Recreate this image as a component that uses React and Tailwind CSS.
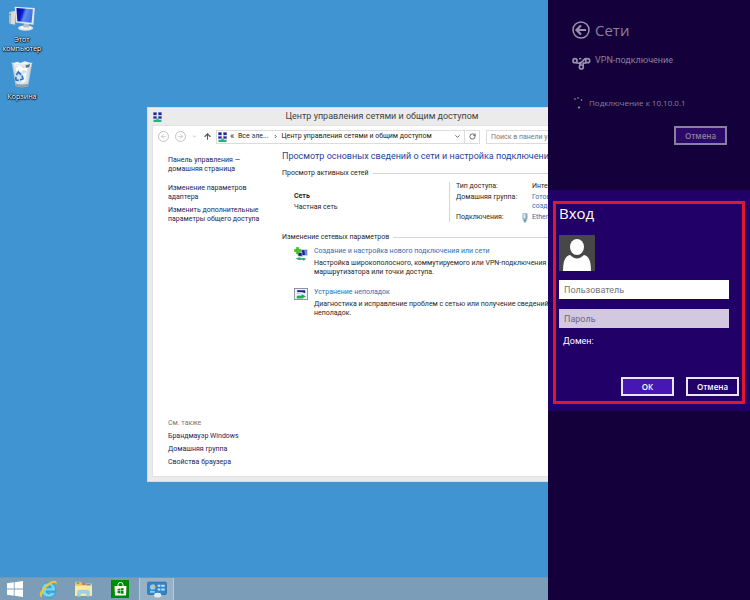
import { ArrowLeft, ArrowRight, ArrowUp, ChevronDown, RotateCw } from "lucide-react";

const SIDE_LINKS = [
  { lines: ["Панель управления —", "домашняя страница"], gap: "mb-[10px]" },
  { lines: ["Изменение параметров", "адаптера"], gap: "mb-1" },
  { lines: ["Изменить дополнительные", "параметры общего доступа"], gap: "" },
];

const SEE_ALSO = ["Брандмауэр Windows", "Домашняя группа", "Свойства браузера"];

function NetworkIcon({ className }) {
  return (
    <svg viewBox="0 0 18 20" className={className} aria-hidden="true">
      <rect x="0" y="0" width="8" height="7" fill="#b9bfdb" />
      <rect x="1" y="1" width="6" height="5" fill="#22229c" />
      <rect x="10" y="0" width="8" height="7" fill="#b9bfdb" />
      <rect x="11" y="1" width="6" height="5" fill="#22229c" />
      <rect x="0" y="8" width="8" height="7" fill="#b9bfdb" />
      <rect x="1" y="9" width="6" height="4" fill="#22229c" />
      <rect x="10" y="8" width="8" height="7" fill="#b9bfdb" />
      <rect x="11" y="9" width="6" height="4" fill="#22229c" />
      <path d="M7 13h4v3h6v4H1v-4h6z" fill="#22b573" />
    </svg>
  );
}

function ComputerIcon() {
  return (
    <svg viewBox="0 0 84 76" className="w-7 h-[25px]" aria-hidden="true">
      <defs>
        <linearGradient id="screen" x1="0" y1="0" x2="1" y2="0.3">
          <stop offset="0" stopColor="#0a10a0" />
          <stop offset="0.4" stopColor="#0a18c8" />
          <stop offset="0.6" stopColor="#5f8cf0" />
          <stop offset="1" stopColor="#3d6fe4" />
        </linearGradient>
      </defs>
      <path d="M3 18l18-3v42l-13-2-5-4z" fill="#d9dcda" />
      <path d="M3 18l6 1v37l-6-5z" fill="#b5bab8" />
      <path d="M4 24l4 1v3l-4-1z" fill="#3aa54a" />
      <ellipse cx="53" cy="67" rx="23" ry="8" fill="#dfe3e4" />
      <ellipse cx="53" cy="65" rx="17" ry="5" fill="#f8f9f9" />
      <path d="M48 48h14l2 17H46z" fill="#b8bec2" />
      <path d="M20 2l61 4-4 51-54-7z" fill="#e3e6e7" />
      <path d="M25 6l50 4-4 41-43-5z" fill="url(#screen)" />
    </svg>
  );
}

function TrashIcon() {
  return (
    <svg viewBox="0 0 66 82" className="w-[22px] h-[27px]" aria-hidden="true">
      <path d="M2 6h62L52 76q-19 8-38 0z" fill="#b5c9d7" />
      <path d="M8 5l11-3 9 4 13-5 17 4 3 12-53 2z" fill="#eef3f6" />
      <path d="M8 15l50-3-8 58-35 1z" fill="#d5e1ea" />
      <path d="M13 22l12-8 13 9 12-7-2 16-9-6-12 10-11-4z" fill="#fff" />
      <path d="M34 40l13-6-3 28-13 6z" fill="#f4f8fa" />
      <path d="M43 10l15-2-3 10-9 3z" fill="#64727d" />
      <path d="M2 6q31 12 62 0" fill="none" stroke="#dfe8ee" strokeWidth="3" />
      <path d="M15 68q18 8 37 0l-1 8q-18 7-36 0z" fill="#8f9ea8" />
      <g fill="none" stroke="#2a6fc4" strokeWidth="5">
        <path d="M16 43l6-10 8 9" />
        <path d="M33 44l3 10-9 4" />
        <path d="M23 59l-8-1-1-10" />
      </g>
    </svg>
  );
}

function DesktopIcon({ children, label }) {
  return (
    <button className="flex w-11 flex-col items-center text-center text-[7px] leading-[9px] text-white [text-shadow:0_0_2px_#000,0_1px_1px_#000,1px_0_1px_#000]">
      {children}
      <span className="mt-1">{label}</span>
    </button>
  );
}

function AddConnectionIcon() {
  return (
    <svg viewBox="0 0 42 42" className="size-[14px] shrink-0" aria-hidden="true">
      <path d="M20 7l21-1v20l-20 3z" fill="#c3cfe0" />
      <path d="M23 10l15-1v14l-14 2z" fill="#1821a0" />
      <path d="M31 9h7v14l-5 1z" fill="#6f97e8" />
      <path d="M11 14l14 1v15l-14-2z" fill="#b9c4d6" />
      <path d="M13 17l10 1v9l-10-1z" fill="#182484" />
      <path d="M5 34l14-3v3l12-1 5 3-7 5-3-3-12 1z" fill="#24a86a" />
      <path d="M7 1h7v6h7v7h-7v7H7v-7H1V7h6z" fill="#4ac226" stroke="#2a9a16" />
    </svg>
  );
}

function TroubleshootIcon() {
  return (
    <svg viewBox="0 0 40 34" className="w-[14px] h-3 shrink-0" aria-hidden="true">
      <rect x="1" y="1" width="38" height="32" fill="#f3f4f7" stroke="#858b98" strokeWidth="3" />
      <path d="M8 6h24v9l-8-3-14-1z" fill="#1b2392" />
      <path d="M8 13l14 2-14 3z" fill="#b7c0d8" />
      <path d="M8 22l14-1v-4l12 7-10 6H8z" fill="#1fae52" />
    </svg>
  );
}

function PlugIcon() {
  return (
    <svg viewBox="0 0 16 28" className="w-[6px] h-[10px]" aria-hidden="true">
      <rect x="1" y="1" width="14" height="18" rx="3" fill="#8fa9b9" />
      <rect x="4" y="3" width="5" height="12" fill="#e8f1f5" />
      <path d="M4 19h8v5H9v4H7v-4H4z" fill="#4a8fb5" />
    </svg>
  );
}

function SectionTitle({ children }) {
  return (
    <div className="flex items-center gap-1">
      <h3>{children}</h3>
      <div className="h-px flex-1 bg-[#d6d6d6]" />
    </div>
  );
}

function AddressBar() {
  return (
    <div className="flex h-[21px] items-center pl-[5px] text-[#222]">
      <button aria-label="Назад" className="flex size-[11px] items-center justify-center rounded-full border border-[#c4c4c4] text-[#b5b5b5]">
        <ArrowLeft size={7} />
      </button>
      <button aria-label="Вперёд" className="ml-[6px] flex size-[11px] items-center justify-center rounded-full border border-[#c4c4c4] text-[#b5b5b5]">
        <ArrowRight size={7} />
      </button>
      <ChevronDown size={5} strokeWidth={4} className="ml-[6px] text-[#bbb]" />
      <button aria-label="Вверх" className="ml-[6px] text-[#555]">
        <ArrowUp size={9} strokeWidth={3} />
      </button>
      <div className="ml-1 flex h-[14px] w-[264px] items-center border border-[#dcdcdc]">
        <NetworkIcon className="ml-px w-[9px] h-[10px]" />
        <span className="ml-[3px] w-2 text-[9px]">«</span>
        <span>Все эле...</span>
        <svg viewBox="0 0 4 6" className="mx-[5px] w-[3px] h-[5px]" aria-hidden="true">
          <path d="M1 1l2 2-2 2" fill="none" stroke="#333" />
        </svg>
        <span className="flex-1">Центр управления сетями и общим доступом</span>
        <ChevronDown size={7} strokeWidth={3} className="mr-[3px] text-[#555]" />
        <button aria-label="Обновить" className="flex h-full w-[15px] items-center justify-center border-l border-[#dcdcdc] text-[#555]">
          <RotateCw size={7} strokeWidth={3} />
        </button>
      </div>
      <input
        aria-label="Поиск"
        placeholder="Поиск в панели управления"
        className="ml-[6px] h-[14px] w-[120px] border border-[#dcdcdc] px-1 placeholder:text-[#777]"
      />
    </div>
  );
}

function ControlWindow() {
  return (
    <section className="absolute left-[147px] top-[107px] flex h-[375px] w-[468px] flex-col border border-[#d3dde4] bg-[#ebebeb] px-1 pb-1 font-[Roboto,'Noto_Sans',sans-serif] text-[7px] leading-[9px] whitespace-nowrap">
      <header className="flex h-[17px] shrink-0 items-center pl-px">
        <NetworkIcon className="w-[9px] h-[10px]" />
        <h1 className="flex-1 pr-2 text-center text-[9px] text-[#444]">
          Центр управления сетями и общим доступом
        </h1>
      </header>
      <div className="flex flex-1 flex-col border border-[#e2e2e2] bg-white">
        <AddressBar />
        <div className="flex flex-1">
          <nav className="flex w-[129px] flex-col pt-[9px] pb-[9px] pl-[15px] text-[#1e2459]">
            {SIDE_LINKS.map((item) => (
              <a key={item.lines[0]} href="#" className={item.gap}>
                {item.lines[0]}
                <br />
                {item.lines[1]}
              </a>
            ))}
            <div className="mt-auto flex flex-col gap-1">
              <p className="text-[#777]">См. также</p>
              {SEE_ALSO.map((label) => (
                <a key={label} href="#">
                  {label}
                </a>
              ))}
            </div>
          </nav>

          <main className="flex-1 text-[#1f1f1f]">
            <h2 className="pt-[3px] text-[9px] leading-3 text-[#1d4496]">
              Просмотр основных сведений о сети и настройка подключений
            </h2>
            <div className="mt-[7px]">
              <SectionTitle>Просмотр активных сетей</SectionTitle>
            </div>

            <div className="mt-1 flex pl-3">
              <div className="w-[155px] pt-[10px]">
                <p className="font-bold">Сеть</p>
                <p className="mt-[2px]">Частная сеть</p>
              </div>
              <dl className="grid grid-cols-[76px_auto] content-start gap-y-[2px] border-l border-[#d6d6d6] pl-[6px]">
                <dt>Тип доступа:</dt>
                <dd>Интер</dd>
                <dt>Домашняя группа:</dt>
                <dd className="text-[#1f6fb8]">
                  <a href="#">
                    Готов
                    <br />
                    создать
                  </a>
                </dd>
                <dt>Подключения:</dt>
                <dd className="relative text-[#1f6fb8]">
                  <span className="absolute -left-[10px] top-0">
                    <PlugIcon />
                  </span>
                  <a href="#">Ethernet</a>
                </dd>
              </dl>
            </div>

            <div className="mt-[11px]">
              <SectionTitle>Изменение сетевых параметров</SectionTitle>
            </div>
            <div className="mt-[5px] flex gap-[6px] pl-3">
              <AddConnectionIcon />
              <div>
                <a href="#" className="text-[#1f6fb8]">
                  Создание и настройка нового подключения или сети
                </a>
                <p className="mt-[3px]">
                  Настройка широкополосного, коммутируемого или VPN-подключения
                  <br />
                  маршрутизатора или точки доступа.
                </p>
              </div>
            </div>
            <div className="mt-[11px] flex gap-[6px] pl-3">
              <TroubleshootIcon />
              <div>
                <a href="#" className="text-[#1f6fb8]">
                  Устранение неполадок
                </a>
                <p className="mt-[3px]">
                  Диагностика и исправление проблем с сетью или получение сведений о
                  <br />
                  неполадок.
                </p>
              </div>
            </div>
          </main>
        </div>
      </div>
    </section>
  );
}

function Taskbar() {
  return (
    <footer className="relative flex h-[23px] items-center border-t border-[#6f98b6] bg-[#7c9db7]">
      <button aria-label="Пуск" className="ml-[7px]">
        <svg viewBox="0 0 16 16" className="size-4" fill="#fff" aria-hidden="true">
          <path d="M0 2.3l6.8-1v6.3H0zM7.6 1.2L16 0v7.6H7.6zM0 8.4h6.8v6.3l-6.8-1zM7.6 8.4H16V16l-8.4-1.2z" />
        </svg>
      </button>
      <button aria-label="Internet Explorer" className="ml-4">
        <svg viewBox="0 0 54 54" className="size-[18px]" aria-hidden="true">
          <path
            d="M50 33H21q1 8 8 8 5 0 7-4h13q-4 15-20 15Q7 51 7 30 8 8 28 8q23 1 22 25zM21 23h16q-1-7-8-7t-8 7z"
            fill="#6ad8ff"
            stroke="#1593d6"
            strokeWidth="2"
          />
          <path
            d="M9 52Q-5 50 9 28 28 4 44 2q13-1 7 14 1-9-5-8-11 2-25 16Q7 40 9 52z"
            fill="#f6c52a"
          />
        </svg>
      </button>
      <button aria-label="Проводник" className="ml-[17px]">
        <svg viewBox="0 0 58 54" className="w-[19px] h-[18px]" aria-hidden="true">
          <path d="M3 8q0-3 3-3h14l4 5h28q3 0 3 3v34H3z" fill="#e8c667" />
          <path d="M8 7h8v4H8z" fill="#35a853" />
          <path d="M25 10h10v4H25z" fill="#e14b3b" />
          <path d="M38 12h12v4H38z" fill="#4b8fdd" />
          <path d="M3 17h52v31H3z" fill="#fbe9a6" />
          <path d="M11 51V36q0-5 5-5h26q5 0 5 5v15h-8V40H19v11z" fill="#9bd5ee" stroke="#62b1d4" />
        </svg>
      </button>
      <button aria-label="Магазин" className="ml-[18px] flex size-[18px] items-center justify-center bg-[#008a00]">
        <svg viewBox="0 0 26 28" className="w-[13px] h-[14px]" aria-hidden="true">
          <path d="M8 8V5q0-4 5-4t5 4v3" fill="none" stroke="#fff" strokeWidth="2" />
          <path d="M1 8h24l-1 19H2z" fill="#fff" />
          <path d="M7 14l5-1v4H7zM13 13l6-1v5h-6zM7 18h5v5l-5-1zM13 18h6v6l-6-1z" fill="#008a00" />
        </svg>
      </button>
      <button
        aria-label="Панель управления"
        className="ml-[10px] flex h-full w-[35px] items-center justify-center border-x border-[#b7cad8] bg-[#97b2c7]"
      >
        <svg viewBox="0 0 60 50" className="w-5 h-[17px]" aria-hidden="true">
          <rect x="2" y="3" width="56" height="37" rx="3" fill="#2e86cb" stroke="#1b5f9c" strokeWidth="2" />
          <circle cx="17" cy="18" r="8" fill="#8dd0f5" />
          <path d="M17 18V9a9 9 0 0 1 8 9z" fill="#f6b73c" />
          <path d="M32 11h8v6h-8zM43 11h10v6H43zM32 22h8v6h-8zM43 22h10v6H43zM9 30h14v4H9z" fill="#bfe3f8" />
          <ellipse cx="32" cy="42" rx="11" ry="7" fill="#e6e9ec" />
        </svg>
      </button>
    </footer>
  );
}

function VpnIcon() {
  return (
    <svg viewBox="0 0 57 39" className="w-[19px] h-[13px]" fill="none" stroke="#9a92aa" strokeWidth="5" aria-hidden="true">
      <circle cx="9" cy="11" r="6" />
      <circle cx="47" cy="11" r="6" />
      <circle cx="28" cy="30" r="6" />
      <path d="M13 16q4 4 9 2 3-1 4-4M23 26q0-4 4-8l9-10q3-4 8-3M33 26q2-5-1-8M33 17q5 3 10-1" />
      <path d="M21 5h7" strokeWidth="4" />
    </svg>
  );
}

function NetworksPane() {
  return (
    <section className="h-[190px] pt-5 pr-[23px] pl-6 text-[#89809c]">
      <div className="flex items-center gap-[5px]">
        <button aria-label="Назад">
          <svg viewBox="0 0 18 18" className="size-[18px]" fill="none" stroke="#9a92aa" aria-hidden="true">
            <circle cx="9" cy="9" r="8" strokeWidth="1.5" />
            <path d="M14 9H5M9 4.500L4.500 9L9 13.500" strokeWidth="2.2" />
          </svg>
        </button>
        <h2 className="text-[15px] leading-5">Сети</h2>
      </div>
      <div className="mt-[15px] flex items-start gap-1 font-[Roboto,'Noto_Sans',sans-serif] text-[9px] leading-[10px]">
        <div className="pt-[2px]">
          <VpnIcon />
        </div>
        <p>VPN-подключение</p>
      </div>
      <div className="mt-[26px] flex items-center gap-[5px] text-[8px] leading-3">
        <svg viewBox="0 0 12 14" className="w-3 h-[14px]" fill="#a79fb5" aria-hidden="true">
          <circle cx="3" cy="3" r="0.8" />
          <circle cx="6" cy="2" r="0.8" />
          <circle cx="9.500" cy="4" r="0.8" />
          <circle cx="7" cy="11.500" r="1" />
        </svg>
        <p>Подключение к 10.10.0.1</p>
      </div>
      <div className="mt-4 flex justify-end">
        <button className="h-[19px] w-[53px] border-2 border-[#89809c] bg-[#2a0a66] text-[8px] font-semibold">
          Отмена
        </button>
      </div>
    </section>
  );
}

function LoginPane() {
  return (
    <section className="h-[221px] bg-[#210067] px-[5px] pt-[11px] text-white">
      <form
        onSubmit={(e) => e.preventDefault()}
        className="h-[203px] border-[3px] border-[#e0182d] px-[3px]"
      >
        <h2 className="text-[15px] leading-[18px]">Вход</h2>
        <svg viewBox="0 0 36 36" className="mt-[13px] size-9" aria-hidden="true">
          <rect width="36" height="36" fill="#474747" />
          <ellipse cx="18" cy="12" rx="7" ry="8" fill="#fff" />
          <path d="M4 36q0-15 7-16 4 3.500 7 3.500t7-3.500q7 1 7 16z" fill="#fff" />
        </svg>
        <input
          aria-label="Пользователь"
          placeholder="Пользователь"
          className="mt-[9px] block h-[19px] w-[170px] bg-white px-[5px] font-[Roboto,'Noto_Sans',sans-serif] text-[9px] text-black placeholder:text-[#767676]"
        />
        <input
          type="password"
          aria-label="Пароль"
          placeholder="Пароль"
          className="mt-[10px] block h-[19px] w-[170px] bg-[#d2c9e1] px-[5px] font-[Roboto,'Noto_Sans',sans-serif] text-[9px] text-black placeholder:text-[#6e6880]"
        />
        <p className="mt-[7px] pl-1 font-[Roboto,'Noto_Sans',sans-serif] text-[9px] leading-3">
          Домен:
        </p>
        <div className="mt-[30px] flex justify-end gap-3 text-[8px] font-semibold">
          <button className="h-[19px] w-[53px] border-2 border-[#e9e4f4] bg-[#4617b4]">ОК</button>
          <button type="button" className="h-[19px] w-[53px] border-2 border-[#e9e4f4]">
            Отмена
          </button>
        </div>
      </form>
    </section>
  );
}

export default function App() {
  return (
    <div className="flex h-screen overflow-hidden font-['Open_Sans','Noto_Sans',sans-serif]">
      <div className="relative flex min-w-0 flex-1 flex-col overflow-hidden bg-[#4194d2]">
        <div className="flex flex-1 flex-col gap-2 pt-[6px]">
          <DesktopIcon
            label={
              <>
                Этот
                <br />
                компьютер
              </>
            }
          >
            <ComputerIcon />
          </DesktopIcon>
          <DesktopIcon label="Корзина">
            <TrashIcon />
          </DesktopIcon>
        </div>
        <ControlWindow />
        <Taskbar />
      </div>
      <aside className="w-[202px] shrink-0 bg-[#14003b]">
        <NetworksPane />
        <LoginPane />
      </aside>
    </div>
  );
}
